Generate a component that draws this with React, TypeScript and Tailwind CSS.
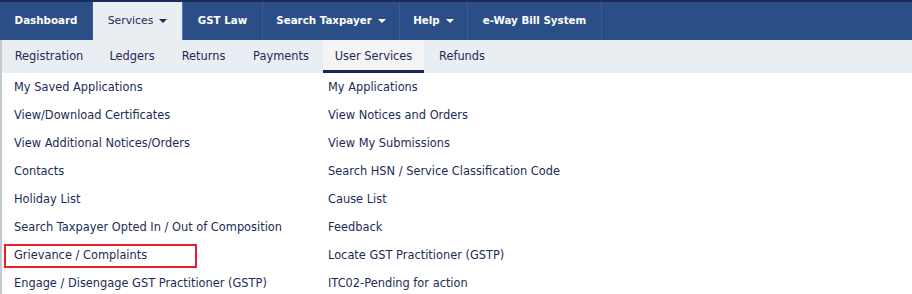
const topNav = [
  { label: 'Dashboard', w: 'w-[93px]' },
  { label: 'Services', caret: true, active: true, w: 'w-[90px]' },
  { label: 'GST Law', w: 'w-[80px]' },
  { label: 'Search Taxpayer', caret: true, w: 'w-[137px]' },
  { label: 'Help', caret: true, w: 'w-[68px]' },
  { label: 'e-Way Bill System', w: 'w-[134px]' },
];

const subNav = [
  { label: 'Registration', w: 'w-[94px]' },
  { label: 'Ledgers', w: 'w-[72px]' },
  { label: 'Returns', w: 'w-[71px]' },
  { label: 'Payments', w: 'w-[84px]' },
  { label: 'User Services', w: 'w-[101px]', active: true },
  { label: 'Refunds', w: 'w-[76px]' },
];

const leftLinks = [
  'My Saved Applications',
  'View/Download Certificates',
  'View Additional Notices/Orders',
  'Contacts',
  'Holiday List',
  'Search Taxpayer Opted In / Out of Composition',
  'Grievance / Complaints',
  'Engage / Disengage GST Practitioner (GSTP)',
];

const rightLinks = [
  'My Applications',
  'View Notices and Orders',
  'View My Submissions',
  'Search HSN / Service Classification Code',
  'Cause List',
  'Feedback',
  'Locate GST Practitioner (GSTP)',
  'ITC02-Pending for action',
];

function Caret() {
  return <span className="ml-[6px] inline-block w-0 h-0 border-x-[4px] border-x-transparent border-t-[4px] border-t-current align-middle" />;
}

export default function App() {
  return (
    <div className="w-[912px] h-[294px] bg-white overflow-hidden font-['DejaVu_Sans',Verdana,sans-serif]">
      {/* Top nav */}
      <nav className="h-[40px] bg-[#2c4e86] border-t-2 border-[#1b2b5c] flex">
        {topNav.map((item) => (
          <div
            key={item.label}
            className={`h-full ${item.w} flex items-center justify-center border-r ${
              item.active
                ? 'bg-[#e9eef2] text-[#1d2b57] text-[10.8px] border-[#4d79b8]'
                : 'text-white font-bold text-[10.3px] border-[#3d5d92]'
            }`}
          >
            {item.label}
            {item.caret && <Caret />}
          </div>
        ))}
      </nav>

      {/* Sub nav */}
      <div className="h-[33px] bg-[#e8eef1] border-l-2 border-[#c9c9c9] flex text-[11.4px] text-[#1d2b57]">
        {subNav.map((s) => (
          <div
            key={s.label}
            className={`h-full ${s.w} flex items-center justify-center pt-[1px] ${
              s.active ? 'bg-[#f4f4f4] border-b-[3px] border-[#17275a] pt-[4px]' : ''
            }`}
          >
            {s.label}
          </div>
        ))}
      </div>

      {/* Links */}
      <div className="border-l-2 border-[#c9c9c9] flex pt-[1px] text-[11.4px] text-[#1d2b57]">
        <ul className="w-[312px] pl-[12px]">
          {leftLinks.map((l) => (
            <li key={l} className="h-[28px] flex items-center">
              {l === 'Grievance / Complaints' ? (
                <span className="-ml-[10px] -mt-[1px] w-[193px] h-[24px] border-2 border-[#e3202b] flex items-center pl-[8px] pt-[1px]">{l}</span>
              ) : (
                l
              )}
            </li>
          ))}
        </ul>
        <ul className="pl-[14px]">
          {rightLinks.map((l) => (
            <li key={l} className="h-[28px] flex items-center">
              {l}
            </li>
          ))}
        </ul>
      </div>
    </div>
  );
}
